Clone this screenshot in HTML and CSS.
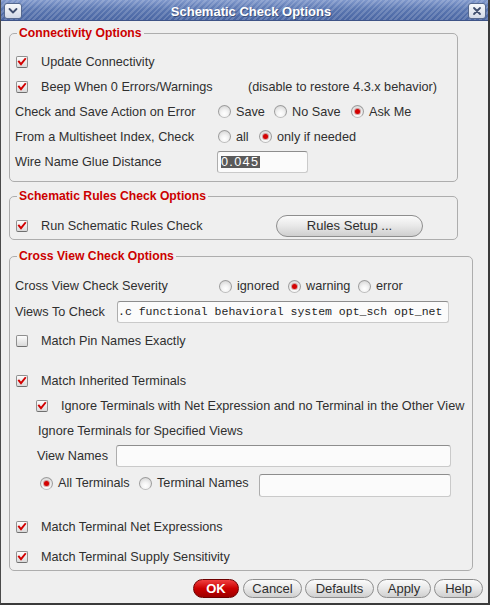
FILE: index.html
```html
<!DOCTYPE html>
<html>
<head>
<meta charset="utf-8">
<title>Schematic Check Options</title>
<link rel="stylesheet" href="styles.css">
</head>
<body>
<div class="window">
  <div class="titlebar">
    <span class="tb-btn"><svg viewBox="0 0 16 14"><path d="M4.5 5 L8 8.5 L11.5 5"/></svg></span>
    <div class="title">Schematic Check Options</div>
    <span class="tb-btn"><svg viewBox="0 0 16 14"><path d="M5 4 L11 10 M11 4 L5 10"/></svg></span>
  </div>

  <div class="content">
    <fieldset class="group g1">
      <legend>Connectivity Options</legend>
      <div class="row r25">
        <span class="check"><span class="chk"><svg viewBox="0 0 12 12"><path d="M2.3 5.6 L4.8 8.6 L9.8 2.4"/></svg></span><span>Update Connectivity</span></span>
      </div>
      <div class="row r25">
        <span class="check cell-beep"><span class="chk"><svg viewBox="0 0 12 12"><path d="M2.3 5.6 L4.8 8.6 L9.8 2.4"/></svg></span><span>Beep When 0 Errors/Warnings</span></span>
        <span>(disable to restore 4.3.x behavior)</span>
      </div>
      <div class="row r25">
        <span class="lbl-col">Check and Save Action on Error</span>
        <span class="opt w56"><span class="radio"></span>Save</span>
        <span class="opt w77"><span class="radio"></span>No Save</span>
        <span class="opt"><span class="radio on"></span>Ask Me</span>
      </div>
      <div class="row r25">
        <span class="lbl-col">From a Multisheet Index, Check</span>
        <span class="opt w41"><span class="radio"></span>all</span>
        <span class="opt"><span class="radio on"></span>only if needed</span>
      </div>
      <div class="row r26">
        <span class="lbl-col lbl-glue">Wire Name Glue Distance</span>
        <span class="input in-glue"><span class="sel">0.045</span></span>
      </div>
    </fieldset>

    <fieldset class="group g2">
      <legend>Schematic Rules Check Options</legend>
      <div class="row">
        <span class="check cell-rules"><span class="chk"><svg viewBox="0 0 12 12"><path d="M2.3 5.6 L4.8 8.6 L9.8 2.4"/></svg></span><span>Run Schematic Rules Check</span></span>
        <span class="btn btn-rules">Rules Setup ...</span>
      </div>
    </fieldset>

    <fieldset class="group g3">
      <legend>Cross View Check Options</legend>
      <div class="row">
        <span class="lbl-col lbl-sev">Cross View Check Severity</span>
        <span class="opt w69"><span class="radio"></span>ignored</span>
        <span class="opt w70"><span class="radio on"></span>warning</span>
        <span class="opt"><span class="radio"></span>error</span>
      </div>
      <div class="row mt2">
        <span class="lbl-views">Views To Check</span>
        <span class="input in-views">.c functional behavioral system opt_sch opt_net</span>
      </div>
      <div class="row mt5">
        <span class="check"><span class="chk off"></span><span>Match Pin Names Exactly</span></span>
      </div>
      <div class="row mt16">
        <span class="check"><span class="chk"><svg viewBox="0 0 12 12"><path d="M2.3 5.6 L4.8 8.6 L9.8 2.4"/></svg></span><span>Match Inherited Terminals</span></span>
      </div>
      <div class="row mt1 indent">
        <span class="check"><span class="chk"><svg viewBox="0 0 12 12"><path d="M2.3 5.6 L4.8 8.6 L9.8 2.4"/></svg></span><span>Ignore Terminals with Net Expression and no Terminal in the Other View</span></span>
      </div>
      <div class="row mt1 indent-lbl">
        <span>Ignore Terminals for Specified Views</span>
      </div>
      <div class="row mt1 indent-vn">
        <span class="lbl-vn">View Names</span>
        <span class="input in-viewnames"></span>
      </div>
      <div class="row row-term mt6">
        <span class="opt opt-all"><span class="radio on"></span>All Terminals</span>
        <span class="opt opt-tn"><span class="radio"></span>Terminal Names</span>
        <span class="input in-termnames"></span>
      </div>
      <div class="row mt18">
        <span class="check"><span class="chk"><svg viewBox="0 0 12 12"><path d="M2.3 5.6 L4.8 8.6 L9.8 2.4"/></svg></span><span>Match Terminal Net Expressions</span></span>
      </div>
      <div class="row mt6">
        <span class="check"><span class="chk"><svg viewBox="0 0 12 12"><path d="M2.3 5.6 L4.8 8.6 L9.8 2.4"/></svg></span><span>Match Terminal Supply Sensitivity</span></span>
      </div>
    </fieldset>
  </div>

  <div class="actions">
    <span class="btn btn-ok">OK</span>
    <span class="btn b-cancel">Cancel</span>
    <span class="btn b-defaults">Defaults</span>
    <span class="btn b-apply">Apply</span>
    <span class="btn b-help">Help</span>
  </div>
</div>
</body>
</html>
```

FILE: styles.css
```css
* { box-sizing: border-box; }
html, body { margin: 0; padding: 0; }
body {
  width: 490px;
  height: 605px;
  overflow: hidden;
  background: #efefef;
  font-family: "Liberation Sans", Arial, sans-serif;
  font-size: 12.7px;
  color: #2f2f2f;
}
.window {
  width: 490px;
  height: 605px;
  display: flex;
  flex-direction: column;
  background: #efefef;
  border-left: 1px solid #4a4a4a;
  border-right: 2px solid #3a3a3a;
  border-bottom: 2px solid #3a3a3a;
}
.titlebar {
  height: 21px;
  flex: none;
  display: flex;
  align-items: flex-start;
  padding: 3px 2px 0 3px;
  border-bottom: 1px solid #3e5386;
  background:
    repeating-linear-gradient(135deg, rgba(255,255,255,0.16) 0 2px, rgba(255,255,255,0) 2px 4px),
    linear-gradient(#8199cc, #5b77b1 45%, #4a66a3);
}
.tb-btn {
  width: 18px;
  height: 16px;
  flex: none;
  border: 1px solid #56698f;
  border-radius: 3px;
  background: linear-gradient(#f7f9fc, #d2d9e6);
  display: flex;
  align-items: center;
  justify-content: center;
}
.tb-btn svg { width: 16px; height: 14px; }
.tb-btn path { fill: none; stroke: #3f4e6e; stroke-width: 1.8; stroke-linecap: round; stroke-linejoin: round; }
.title {
  flex: 1;
  text-align: center;
  padding-left: 12px;
  margin-top: 1px;
  color: #ffffff;
  font-weight: bold;
  font-size: 13px;
  line-height: 16px;
  text-shadow: 1px 1px 0 rgba(20,30,60,0.45);
}
.content {
  flex: 1;
  padding: 4px 0 0 8px;
}
.group {
  margin: 0;
  min-width: 0;
  border: 1px solid #adadad;
  border-radius: 5px;
  padding: 8px 6px 6px 6px;
}
.group legend {
  margin-left: 1px;
  padding: 0 2px;
  color: #cc0000;
  font-weight: bold;
  font-size: 12.2px;
  line-height: 16px;
}
.g1 { width: 449px; }
.g2 { width: 449px; margin-top: 6px; padding: 10px 6px 1px 6px; }
.g3 { width: 464px; margin-top: 8px; padding: 10px 6px 1px 6px; }

.row {
  display: flex;
  align-items: center;
  height: 24px;
  white-space: nowrap;
  line-height: 16px;
}
.r25 { height: 25px; }
.r26 { height: 26px; }
.mt1 { margin-top: 1px; }
.mt2 { margin-top: 2px; }
.mt5 { margin-top: 5px; }
.mt6 { margin-top: 6px; }
.mt16 { margin-top: 16px; }
.mt18 { margin-top: 18px; }

.check { display: flex; align-items: center; gap: 13px; }
.cell-beep { width: 232px; }
.cell-rules { width: 260px; }
.chk {
  width: 12px;
  height: 12px;
  flex: none;
  border: 1px solid #8f8f8f;
  border-bottom-color: #6f6f6f;
  border-radius: 2px;
  background: linear-gradient(#fdfdfd, #d9d9d9);
  display: flex;
}
.chk svg { width: 10px; height: 10px; margin: 0; }
.chk path { fill: none; stroke: #d20000; stroke-width: 2.3; stroke-linecap: square; }

.lbl-col { width: 203px; flex: none; margin-left: -1px; }
.lbl-glue { width: 202px; }
.lbl-sev { width: 204px; }
.opt { display: flex; align-items: center; gap: 5px; flex: none; }
.w41 { width: 41px; }
.w56 { width: 56px; }
.w69 { width: 69px; }
.w70 { width: 70px; }
.w77 { width: 77px; }
.radio {
  width: 13px;
  height: 13px;
  flex: none;
  border-radius: 50%;
  border: 1px solid #9c9c9c;
  border-bottom-color: #bdbdbd;
  background: radial-gradient(circle at 50% 70%, #ffffff 0, #f4f4f4 35%, #cfcfcf 100%);
  display: flex;
  align-items: center;
  justify-content: center;
}
.radio.on::after {
  content: "";
  width: 5px;
  height: 5px;
  border-radius: 50%;
  background: #d40000;
  box-shadow: 0 0 0 1px rgba(150,0,0,0.35);
}

.input {
  display: flex;
  align-items: center;
  height: 22px;
  flex: none;
  border: 1px solid #cacaca;
  border-top-color: #8d8d8d;
  border-left-color: #adadad;
  border-radius: 3px;
  background: #fbfbfb;
}
.in-glue { width: 91px; padding-left: 3px; }
.sel {
  background: #5a5a5a;
  color: #ffffff;
  line-height: 12px;
  letter-spacing: 1.3px;
  padding-right: 1px;
}
.lbl-views { width: 102px; flex: none; margin-left: -1px; }
.in-views {
  width: 332px;
  overflow: hidden;
  white-space: nowrap;
  font-family: "Liberation Mono", "Courier New", monospace;
  font-size: 11.5px;
  color: #1e1e1e;
  padding-left: 0;
}
.indent { padding-left: 20px; }
.indent-lbl { padding-left: 22px; }
.indent-vn { padding-left: 21px; }
.lbl-vn { width: 79px; flex: none; }
.in-viewnames { width: 335px; }
.row-term { height: 23px; padding-left: 24px; align-items: flex-start; }
.opt-all { width: 99px; height: 18px; }
.opt-tn { width: 120px; height: 18px; }
.in-termnames { width: 192px; height: 23px; }

.btn {
  display: flex;
  align-items: center;
  justify-content: center;
  height: 19px;
  flex: none;
  border: 1px solid #8e8e8e;
  border-radius: 10px;
  background: linear-gradient(#fbfbfb, #e8e8e8 50%, #cfcfcf);
  color: #2e2e2e;
  font-size: 13px;
  white-space: nowrap;
}
.btn-rules { width: 147px; height: 22px; border-radius: 11px; }
.actions {
  flex: none;
  display: flex;
  justify-content: flex-end;
  gap: 3px;
  padding: 0 5px 5px 0;
}
.btn-ok {
  width: 46px;
  margin-right: 1px;
  border-color: #6e0000;
  background: linear-gradient(#f04040, #cc0000 50%, #9c0000);
  color: #ffffff;
  font-weight: bold;
}
.b-cancel { width: 59px; }
.b-defaults { width: 69px; }
.b-apply { width: 54px; }
.b-help { width: 49px; }
```
